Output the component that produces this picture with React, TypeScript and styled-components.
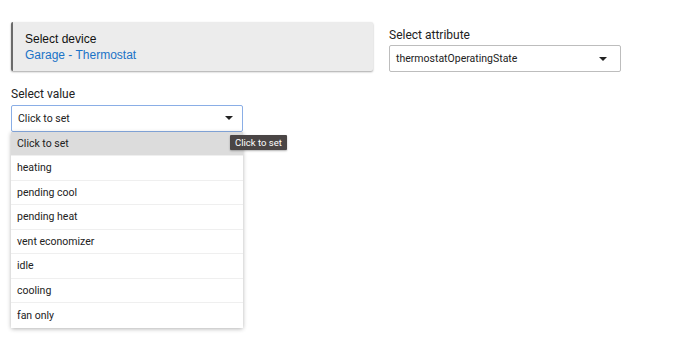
import React from 'react';
import styled, { createGlobalStyle } from 'styled-components';

const GlobalStyle = createGlobalStyle`
	html, body {
		margin: 0;
		padding: 0;
		background: #ffffff;
	}
	body {
		font-family: Roboto, "Liberation Sans", Arial, sans-serif;
		color: #222;
	}
`;

const values = ['Click to set', 'heating', 'pending cool', 'pending heat', 'vent economizer', 'idle', 'cooling', 'fan only'];

const Caret = () => (
	<svg width="8" height="4" viewBox="0 0 8 4">
		<path d="M0 0 L8 0 L4 4 Z" fill="#222" />
	</svg>
);

const App: React.FC = () => {
	return (
		<>
			<GlobalStyle />
			<Page>
				<TopRow>
					<DeviceCard>
						<DeviceLabel>Select device</DeviceLabel>
						<DeviceLink>Garage - Thermostat</DeviceLink>
					</DeviceCard>
					<Field>
						<Label>Select attribute</Label>
						<SelectBox $width={232} $padRight={13}>
							<span>thermostatOperatingState</span>
							<Caret />
						</SelectBox>
					</Field>
				</TopRow>
				<Field>
					<Label>Select value</Label>
					<SelectWrap>
						<SelectBox $width={232} $padRight={9} $focused>
							<span>Click to set</span>
							<Caret />
						</SelectBox>
						<Menu>
							{values.map((v, i) => (
								<MenuItem key={v} $active={i === 0}>
									{v}
								</MenuItem>
							))}
						</Menu>
						<Tooltip>Click to set</Tooltip>
					</SelectWrap>
				</Field>
			</Page>
		</>
	);
};

const Page = styled.div`
	padding: 22px 0 0 11px;
	width: 679px;
	height: 318px;
	display: flex;
	flex-direction: column;
	gap: 9.5px;
`;

const TopRow = styled.div`
	display: flex;
	align-items: flex-start;
	gap: 16px;
`;

const DeviceCard = styled.div`
	box-sizing: border-box;
	width: 362px;
	height: 49px;
	background: #ececec;
	border-left: 2px solid #6b6b6b;
	border-radius: 2px;
	box-shadow: 0 1px 2px rgba(0, 0, 0, 0.35);
	padding: 9px 0 0 12px;
	font-family: "Liberation Sans", Arial, sans-serif;
	font-size: 12px;
	line-height: 16px;
`;

const DeviceLabel = styled.div`
	color: #111;
`;

const DeviceLink = styled.div`
	color: #1a73c7;
`;

const Field = styled.div`
	display: flex;
	flex-direction: column;
	gap: 1.5px;
	padding-top: 4.5px;
`;

const Label = styled.div`
	font-size: 12px;
	line-height: 17px;
	color: #222;
`;

const SelectWrap = styled.div`
	position: relative;
	width: 232px;
`;

const SelectBox = styled.div<{ $width: number; $padRight: number; $focused?: boolean }>`
	box-sizing: border-box;
	width: ${(p) => p.$width}px;
	height: 27px;
	border: 1px solid ${(p) => (p.$focused ? '#8aaee6' : '#bdbdbd')};
	border-radius: 2px;
	display: flex;
	align-items: center;
	justify-content: space-between;
	padding: 0 ${(p) => p.$padRight}px 0 6px;
	font-size: 10.5px;
	color: #222;
	background: #fff;
`;

const Menu = styled.div`
	position: absolute;
	top: 27px;
	left: 0;
	width: 232px;
	background: #fff;
	box-shadow: 0 1px 4px rgba(0, 0, 0, 0.3);
	border-radius: 0 0 2px 2px;
`;

const MenuItem = styled.div<{ $active?: boolean }>`
	box-sizing: border-box;
	height: 24.5px;
	display: flex;
	align-items: center;
	padding-left: 6px;
	font-size: 10.5px;
	color: #222;
	background: ${(p) => (p.$active ? '#dcdcdc' : '#fff')};
	border-bottom: 1px solid #efefef;
	&:last-child {
		border-bottom: none;
	}
`;

const Tooltip = styled.div`
	position: absolute;
	top: 30px;
	left: 219px;
	height: 15px;
	padding: 0 5px;
	background: #4a4545;
	color: #fff;
	font-size: 9.5px;
	line-height: 15px;
	white-space: nowrap;
	border-radius: 1px;
	box-shadow: 0 1px 2px rgba(0, 0, 0, 0.3);
`;

export default App;
